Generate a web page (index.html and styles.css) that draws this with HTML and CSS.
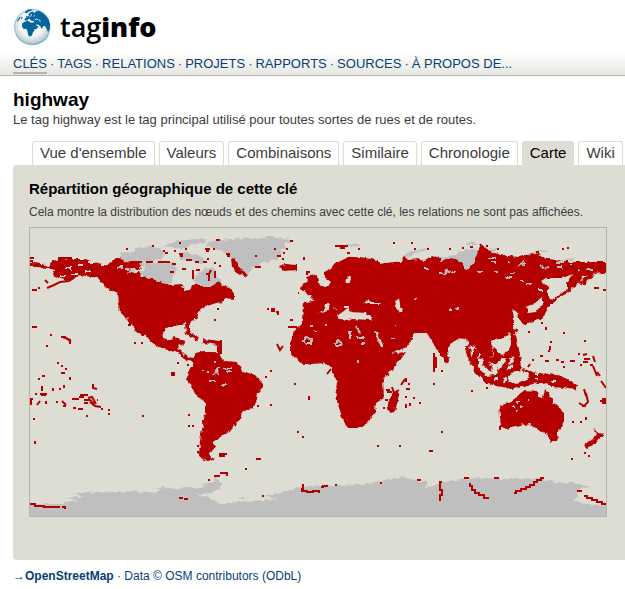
FILE: index.html
```html
<!DOCTYPE html>
<html lang="fr">
<head>
<meta charset="utf-8">
<title>highway | Clés | taginfo</title>
<link rel="stylesheet" href="styles.css">
</head>
<body>
<header class="header">
  <a class="logo" href="#">
    <svg class="globe" viewBox="39 24 116 116" aria-hidden="true">
      <defs>
        <radialGradient id="ball" cx=".48" cy=".42" r=".6">
          <stop offset="0" stop-color="#fff"/>
          <stop offset=".55" stop-color="#f6f7f8"/>
          <stop offset=".8" stop-color="#d3d6d9"/>
          <stop offset="1" stop-color="#a9b4bb"/>
        </radialGradient>
      </defs>
      <circle cx="98" cy="82" r="54" fill="url(#ball)" stroke="#7cc0df" stroke-width="3"/>
      <path fill="#06659f" d="M74 62L75 56 80 54 78 48 84 50 88 47 86 42 93 36 101 35 103 40 110 34 120 33 130 39 140 48 148 59 152 74 151 88 146 98 142 88 137 79 131 80 127 88 122 80 117 75 109 74 112 79 117 80 112 87 106 90 101 86 105 82 104 93 99 100 97 108 90 112 85 106 83 95 80 88 70 87 66 79 68 70 76 65 86 64 93 68 102 68 103 64 94 63 90 57 85 58 84 62Z"/>
      <path fill="#06659f" d="M74 38L82 31 90 28 100 29 96 32 88 35 80 40ZM50 66L58 52 63 50 60 57 55 64ZM64 52L68 51 67 57 64 58Z"/>
      <path fill="none" stroke="#eef3f6" stroke-width="3" d="M89 52L94 47 95 42M105 60L110 58 116 60M120 60L122 66M103 50L106 46"/>
      <path fill="none" stroke="#5fb2d8" stroke-width="4" opacity=".6" d="M48 104Q62 134 98 135Q132 134 147 107"/>
    </svg>
    <span class="brand">tag<b>info</b></span>
  </a>
  <nav class="menu">
    <a class="current" href="#">CLÉS</a><span>·</span><a href="#">TAGS</a><span>·</span><a href="#">RELATIONS</a><span>·</span><a href="#">PROJETS</a><span>·</span><a href="#">RAPPORTS</a><span>·</span><a href="#">SOURCES</a><span>·</span><a href="#">À PROPOS DE...</a>
  </nav>
</header>
<main class="main">
  <h1>highway</h1>
  <p class="description">Le tag highway est le tag principal utilisé pour toutes sortes de rues et de routes.</p>
  <ul class="tabs">
    <li><a href="#">Vue d'ensemble</a></li>
    <li><a href="#">Valeurs</a></li>
    <li><a href="#">Combinaisons</a></li>
    <li><a href="#">Similaire</a></li>
    <li><a href="#">Chronologie</a></li>
    <li class="selected"><a href="#">Carte</a></li>
    <li><a href="#">Wiki</a></li>
  </ul>
  <section class="panel">
    <h2>Répartition géographique de cette clé</h2>
    <p>Cela montre la distribution des nœuds et des chemins avec cette clé, les relations ne sont pas affichées.</p>
    <svg class="map" viewBox="30 228 576 288" role="img" aria-label="Répartition géographique">
      <defs>
        <filter id="rough" filterUnits="userSpaceOnUse" x="20" y="220" width="600" height="310">
          <feTurbulence type="fractalNoise" baseFrequency=".2" numOctaves="2" seed="4"/>
          <feDisplacementMap in="SourceGraphic" scale="5" xChannelSelector="R" yChannelSelector="G"/>
        </filter>
      </defs>
      <!-- land without data -->
      <g class="land" filter="url(#rough)">
        <path d="M205 245L213 241 230 239 270 237 290 240 296 241 284 244 286 248 280 250 282 256 272 261 260 264 253 268 248 275 240 273 233 262 228 254 220 250Z"/>
        <path d="M164 246L178 241 195 239 207 239 205 242 190 245 184 248 172 247ZM119 257L121 253 134 251 136 248 150 246 162 249 165 253 160 260 140 262 122 260ZM136 262L155 263 174 262 176 270 170 285 155 282 143 276 145 266 137 266 130 278 118 276 105 269 110 262ZM178 255L188 252 198 256 206 260 202 264 192 260 180 260ZM193 280L195 275 201 272 206 268 215 269 216 276 221 280 218 286 200 287Z"/>
        <path d="M403 257Q407 252 415 251L427 248 428 250 415 253 407 257ZM346 246L355 243 361 245 358 247ZM431 260L440 257 455 255 460 251 474 249 482 251 492 252 498 258 496 264 488 268 478 266 475 270 468 271 462 265 448 266ZM466 244L475 242 478 245 466 245ZM490 248L499 250 490 252ZM535 250H549V252H535ZM565 259L574 258 574 260 565 261Z"/>
        <path d="M20 528V504H62L78 500 66 498 85 496 72 493 90 493 110 491 155 492 165 489 195 488 206 486 202 484 212 482 216 478 221 484 220 489 210 493 196 495 210 497 212 500 224 504 237 502 280 499 262 497 283 492 300 487 340 485 370 484 385 480 403 477 413 480 428 482 425 489 440 483 460 479 480 478 510 479 537 478 555 482 573 483 590 487 577 490 578 497 572 501 587 504 616 507V528ZM153 489L165 487 173 489ZM237 499L242 497 248 499Z"/>
      </g>
      <!-- continents covered by data -->
      <g class="data" filter="url(#rough)">
        <path d="M24 262L41 264 49 266 53 261 60 258 70 259 85 259 98 263 106 266 113 260 119 257 123 261 139 262 141 270 130 268 128 273 138 272 142 276 150 278 159 282 170 285 182 284 184 291 190 290 192 284 202 286 212 286 218 282 224 286 230 287 234 293 234 299 224 298 222 302 212 304 205 307 198 312 196 318 190 322 190 331 186 331 185 324 176 326 168 326 163 332 164 339 169 341 173 337 179 338 180 342 178 348 185 355 191 358 197 353 204 351 213 351 220 354 225 362 237 363 242 371 255 375 263 383 263 387 258 392 257 400 253 409 243 411 241 419 232 428 228 433 220 436 214 443 214 449 209 453 210 457 215 459 208 462 199 456 200 440 203 425 205 413 205 401 196 396 191 385 187 382 188 371 193 366 192 361 185 359 180 354 171 351 161 348 151 342 146 335 141 335 134 329 131 323 120 312 119 305 118 294 106 288 98 278 79 275 72 280 63 280 53 275 55 270 48 268 24 266Z"/>
        <path d="M290 340L293 332 302 324 303 302 313 301 312 297 307 293 301 288 302 284 307 282 306 277 317 274 318 283 323 288 330 284 329 280 324 277 324 272 329 270 335 263 347 258 360 257 377 260 380 264 393 262 400 262 404 256 408 260 420 259 427 260 432 255 440 258 440 261 450 258 455 259 462 264 466 270 470 268 474 262 480 247 484 246 488 250 500 255 518 257 537 253 547 258 562 262 612 262 612 272 593 274 583 277 577 285 565 294 553 303 547 307 546 313 542 319 530 322 521 328 517 332 513 333 510 333 502 338 490 341 494 348 493 355 487 358 478 352 475 345 470 347 467 340 460 338 453 342 448 348 449 360 446 363 443 358 438 352 433 343 427 333 413 333 413 339 405 348 398 351 390 354 406 352 399 362 395 367 383 380 384 398 376 403 375 412 367 424 360 428 347 428 342 417 336 398 338 382 332 373 332 367 323 363 303 365 295 358 290 352Z"/>
        <path d="M499 406L512 402 515 397 525 390 537 391 538 397 543 398 545 389 548 392 553 402 564 412 564 422 558 432 556 442 551 442 547 434 540 431 530 424 515 427 505 429 501 426Z"/>
        <path d="M593 427L597 432 604 433 597 442 587 448 584 445 597 435ZM397 390L399 395 395 412 389 413 387 402ZM279 266L285 264 297 265 297 270 284 271ZM231 258L236 259 237 266 242 271 248 274 245 277 238 274 232 267ZM442 352L449 362 446 364Z"/>
        <path d="M474 348L484 353 488 358 494 355 494 348 501 355 508 352 512 342 518 346 520 358 521 368 531 372 563 376 577 386 575 390 563 388 553 387 540 382 527 386 513 389 500 386 487 383 477 373 470 365Z"/>
        <path class="line" d="M468 345L469 356 475 368 488 382 512 387M512 333L515 345 519 358M174 340L184 343M186 331L192 336 198 339M203 341L220 343 220 354M593 274L580 284"/>
      </g>
      <!-- seas, lakes and gaps inside the continents -->
      <g class="gap" filter="url(#rough)">
        <path d="M541 281L546 278 562 278 573 274 569 279 567 282 567 289 561 294 555 299 548 298 548 287ZM525 308L535 303 543 296 543 303 536 312 530 313ZM512 309L517 312 518 318 525 325 520 331 513 329 513 320ZM338 315L344 311 347 308 352 312 365 313 373 318 371 320 352 319 347 321 340 319ZM364 303L368 299 371 302 379 302 381 304 366 304ZM395 300L399 298 400 305 403 311 400 313 396 306ZM317 313L324 310 325 304 330 304 328 310 322 312ZM334 305L336 310 342 310 335 310ZM344 282L350 276 351 278 349 283ZM374 331L377 332 384 347 381 347ZM478 357L484 360 482 366 490 372 493 368 488 363 496 364 505 357 506 361 500 368 495 375 486 376 478 366ZM508 362L512 356 514 361 510 366ZM512 372L522 370 529 374 527 380 516 384 507 380Z"/>
        <path class="ocean" d="M343 307H348M480 352V357M497 350L506 347M508 369L513 366M524 380H528M535 374H539M494 379H498M504 383L506 377M552 381H556M535 379H538M170 336L176 331M203 259L207 264M77 265H83M66 268H71M72 274H77M60 277H66M89 262H95M102 266H105M84 272H90M538 290H543"/>
        <path class="bare" d="M116 267H122M125 269H129M140 273H145M153 277H158M165 281H170M180 287H184M205 284H211M223 368H231M226 372H232M217 367H220M209 382H215M213 375L217 369 218 375M201 371H203M207 373H209M214 362H216M222 385H228M301 341H305V338L311 339V344M305 343H311M310 326H313M315 332H318M334 343L338 341 342 344M335 345H341M350 331V339M356 326L360 334M357 338H364M362 343H365M391 338H395M325 325H327M356 361H358M440 274H444L446 270 450 272M451 272H456M462 266H466V261M465 268H471M488 258H496M491 262H496M519 266L523 261 524 266M522 263H525M507 262H510M540 265L543 268 548 267M555 263H562M557 267H562M570 264H573M505 278H513M509 273H514M520 281H524M527 284H530M478 273H482M493 271H498M586 269H593M577 270H579M396 262H398M425 268H428M423 260H426M512 407H515M517 402H520M520 406H522M527 401H529M515 411H517M414 299H416M470 286H471M449 310H451M456 309H459M396 325H397"/>
      </g>
      <!-- scattered islands and coastal dots -->
      <path class="dots" d="M30 258H34M30 261H33M58 258H72M74 261H86M126 249H128M152 246H154M163 251H165M165 253H168M130 262H142M146 262H153M158 262H170M172 264H176M45 280L48 283M32 290H37M38 288H40M47 288L54 285 60 282 69 281 75 277M32 327H37M50 335H52M61 337H65L71 342M63 337L70 340V344M46 346H48M57 363H59M61 366H63M65 369H67M62 373H65M128 325H130V322M134 343H136M141 343H143M179 243H181M174 251H176M179 254H183M180 256H183M186 260H192M195 262H199M203 262H207M205 249H210M206 251H209M213 249H215M216 240H220M207 259H209M214 263H216M219 266H221M209 281V274L211 270M215 278V271M206 274H209M193 270V279M185 249H187M196 270H200M170 272H174M182 269H186M226 254H230M227 256H230M255 256H257M255 267H261M274 249H276M277 256H281M283 253H285M286 249H288M290 241H293M282 259H284M304 257V260M306 272H310M306 274H308M298 293H299M267 309H269M271 309H275M271 311H275M276 312H278V315M217 309H219M214 320H216M222 300H224M290 320H293M288 327H297M277 344L280 350 283 346M270 371H272M265 377H267M257 406H259M270 405H272M294 384H296M308 397H310M308 399H310M189 375H191M177 363H179M187 365H189M171 373H175M171 375H175M188 415H190M188 426H190M192 426H194M197 446H199M197 452H199M219 454H227M219 456H225M245 469H247M256 459H261M208 480H210M214 476H220M220 473H227V476M179 498H183M184 499H188M262 496H264M297 432H299M302 437H304M377 446H379M399 446H401M429 451H433M441 432H443M433 384H435M441 371H443M434 353V372M436 357V368M401 385L405 379M406 378V382M408 384H410M406 389H410M392 387L394 393 399 390M386 390H390M387 392H392M385 400H388M383 408H385M405 397H407M406 404V408M410 403V406M413 398H415M419 403H421M335 246H348M340 248H345M347 253H350M358 249H360M393 243H395M411 243H413M414 249H416M427 249H429M327 374L331 369M449 249H451M462 248H464M470 247H473M480 244L483 248M486 246H488M497 249H499M536 252H539M562 249H564M567 248H569M583 284H586M594 288H599M603 290H606M563 333H565M584 341H586M546 330V327M541 323H543M528 332H530M550 342H552M550 350V346M548 351H550M540 356H543M532 360H534M530 364L528 367M545 361H549M556 360H559M561 362H564M563 367H565M570 361H575M578 354H580M583 355L587 354M584 359H590M583 362H588M580 365H582M590 365H593M593 356L595 362M593 366L597 376M597 372L600 376M601 381L606 388M584 389L586 396M586 393L588 402 584 406 579 403M582 406H586M602 399H606M600 401H606M602 403H606M580 422H582M586 417V420M572 422H574M571 459H573M584 453H586M588 456H590M471 391H473M486 388H488M577 491H580M500 426V430M42 376H45M38 379H40M42 386V391M30 399H33M35 394H37M40 394H47M46 401V404M37 405L40 401M41 395H46M31 398V405M53 388V391M59 389H61M64 385V388M70 377V380M56 402H58M62 401L66 405M63 406H66M73 408H76M78 409H83M61 373H63M93 384V388L97 389M72 399H79M79 397H84M80 395H88M84 400H90L94 404M88 398L92 397 96 404M84 403H88M90 402L95 406 101 407M97 400H98M101 409H103M108 414H110M109 409V411M86 416H88M33 419H35M35 441V444M142 416H144"/>
      <path class="track" d="M30 504H35V506H44V507H60M62 507H65V509M303 484V489H302V491H307V492H314M312 491H319V493M321 487H323V486H328M335 485H337M380 483H382M417 480H421M442 482H440V490H442V495H440V501M470 483V486H472V490H475V493H479V495H484V498H489M514 493H516V491H521V489H526V487H530V485H534V482H537V480H541V478H544M464 478H469M494 478H499M584 496H587V498H592V500H597V502H602V504H606M578 491H582"/>
    </svg>
  </section>
  <footer class="footer"><a href="#">→<b>OpenStreetMap</b></a> · <a href="#">Data © OSM contributors (ODbL)</a></footer>
</main>
</body>
</html>
```
FILE: styles.css
```css
* { box-sizing: border-box; }

body {
  margin: 0;
  background: #fff;
  color: #3c3c3c;
  font: 13px/16px "Liberation Sans", Arial, sans-serif;
  overflow-x: hidden;
}

a { color: #083e76; text-decoration: none; }
h1, h2, p { margin: 0; }

.header {
  padding: 8px 13px 0;
  background: linear-gradient(#fff 52px, #e6e7e1 100%);
  border-bottom: 1px solid #b4b4ac;
}

.logo { display: flex; align-items: center; gap: 9px; height: 38px; color: #000; }
.globe { width: 38px; height: 38px; }
.brand { font: 600 27px/38px "Open Sans", "Noto Sans", sans-serif; }
.brand b { font-weight: 800; }

.menu {
  display: flex;
  align-items: flex-start;
  gap: 3px;
  height: 29px;
  padding-top: 10px;
  white-space: nowrap;
}
.menu .current { border-bottom: 2px solid #b4b4ac; }

.main { padding: 12px 0 0 13px; }

h1 { color: #000; font-size: 19px; line-height: 24px; }
.description { white-space: nowrap; }

.tabs {
  display: flex;
  gap: 4px;
  margin: 13px 0 0;
  padding: 0 0 0 19px;
  list-style: none;
  overflow: hidden;
}
.tabs li {
  flex: none;
  height: 24px;
  padding: 0 7px;
  border: 1px solid #ddddd4;
  border-bottom: 0;
  border-radius: 3px 3px 0 0;
  font-size: 15px;
  line-height: 21px;
}
.tabs a { color: #3c3c3c; }
.tabs .selected { background: #ddddd4; }
.tabs .selected a { color: #000; }

.panel {
  padding: 14px 0 43px 16px;
  background: #ddddd4;
  border-radius: 4px 0 0 4px;
}
.panel h2 { color: #000; font-size: 15px; line-height: 20px; }
.panel p { margin: 5px 0 7px; font-size: 12px; }

.map {
  display: block;
  width: calc(100% - 18px);
  max-width: 578px;
  border: 1px solid #b4b4ac;
}
.land { fill: #bfbfbf; }
.data { fill: #b40000; }
.line { fill: none; stroke: #b40000; stroke-width: 4; }
.gap { fill: #ddddd4; }
.ocean { fill: none; stroke: #ddddd4; stroke-width: 2; }
.bare { fill: none; stroke: #bfbfbf; stroke-width: 2; }
.dots { fill: none; stroke: #b40000; stroke-width: 2; }
.track { fill: none; stroke: #b40000; stroke-width: 2; }

.footer { padding: 8px 0; font-size: 12px; }
```
